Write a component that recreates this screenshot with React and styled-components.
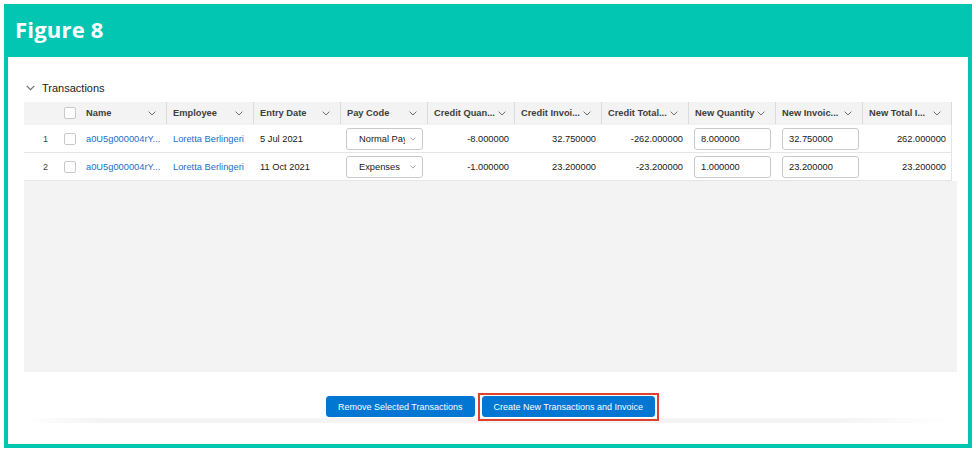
import React from "react";
import styled, { createGlobalStyle } from "styled-components";

const Global = createGlobalStyle`
  html, body { margin: 0; padding: 0; background: #ffffff; }
  body { font-family: "Liberation Sans", Arial, sans-serif; }
  * { box-sizing: border-box; }
`;

const TEAL = "#03c6b2";

const Frame = styled.div`
  margin: 4px;
  width: 968px;
  height: 444px;
  background: ${TEAL};
  padding: 0 4px 4px;
  display: flex;
  flex-direction: column;
`;

const FigureHeader = styled.div`
  height: 53px;
  flex: none;
  display: flex;
  align-items: center;
  padding: 0 0 4px 7px;
  color: #ffffff;
  font-family: "Open Sans", "Liberation Sans", sans-serif;
  font-weight: 700;
  font-size: 22px;
  letter-spacing: 0.2px;
`;

const Content = styled.div`
  flex: 1;
  background: #ffffff;
  display: flex;
  flex-direction: column;
  padding: 23px 11px 0 16px;
`;

const SectionTitle = styled.div`
  height: 16px;
  display: flex;
  align-items: center;
  gap: 7px;
  padding-left: 2px;
  margin-bottom: 6px;
  font-size: 11px;
  color: #181818;
`;

const Grid = styled.div`
  display: flex;
  flex-direction: column;
`;

const Table = styled.div`
  width: 928px;
  border-right: 1px solid #e5e5e5;
`;

const Row = styled.div`
  display: flex;
  height: ${(p) => (p.$header ? 23 : 28)}px;
  background: ${(p) => (p.$header ? "#f3f3f3" : "#ffffff")};
  border-bottom: 1px solid ${(p) => (p.$header ? "#f3f3f3" : "#e5e5e5")};
`;

const Cell = styled.div`
  width: ${(p) => p.$w}px;
  flex: none;
  display: flex;
  align-items: center;
  justify-content: ${(p) => (p.$right ? "flex-end" : "flex-start")};
  padding: 0 ${(p) => (p.$right ? 6 : 0)}px 0 ${(p) => (p.$pl ?? 6)}px;
  font-size: 9.3px;
  color: #181818;
  white-space: nowrap;
  overflow: hidden;
`;

const HeadCell = styled.div`
  width: ${(p) => p.$w}px;
  flex: none;
  display: flex;
  align-items: center;
  justify-content: space-between;
  gap: 3px;
  padding: 0 10px 0 6px;
  font-size: 9.3px;
  font-weight: 700;
  color: #3e3e3c;
  white-space: nowrap;
  border-right: 1px solid #dddbda;
  height: 100%;
`;

const NumCell = styled.div`
  width: 36px;
  flex: none;
  display: flex;
  align-items: center;
  justify-content: flex-end;
  padding-right: 12px;
  font-size: 9px;
  color: #444444;
`;

const CheckCell = styled.div`
  width: 20px;
  flex: none;
  display: flex;
  align-items: center;
  padding-left: 4px;
`;

const Box = styled.span`
  width: 12px;
  height: 12px;
  border: 1px solid #c9c9c9;
  border-radius: 2px;
  background: #ffffff;
`;

const Link = styled.span`
  color: #1a6ec8;
`;

const Select = styled.div`
  width: 77px;
  height: 22px;
  border: 1px solid #c9c9c9;
  border-radius: 3px;
  background: #fff;
  display: flex;
  align-items: center;
  gap: 5px;
  padding: 0 6px 0 12px;
  font-size: 9.3px;
  color: #181818;
`;

const SelectText = styled.span`
  flex: 1;
  overflow: hidden;
  white-space: nowrap;
  min-width: 0;
`;

const Input = styled.div`
  width: 77px;
  height: 22px;
  border: 1px solid #c9c9c9;
  border-radius: 3px;
  background: #fff;
  display: flex;
  align-items: center;
  padding-left: 6px;
  font-size: 9.3px;
  color: #181818;
`;

const Empty = styled.div`
  height: 191px;
  background: #f3f3f3;
`;

const Footer = styled.div`
  margin-top: 24px;
  display: flex;
  justify-content: center;
  gap: 7px;
`;

const Button = styled.button`
  position: relative;
  height: 21px;
  padding: 0 11px;
  background: #0176d3;
  border: 1px solid #0176d3;
  border-radius: 3px;
  color: #ffffff;
  font-family: "Liberation Sans", Arial, sans-serif;
  font-size: 9px;
  cursor: pointer;
`;

const Highlight = styled.span`
  position: absolute;
  left: -5px;
  right: -5px;
  top: -4px;
  bottom: -5px;
  border: 2px solid #e0402e;
  pointer-events: none;
`;

const FooterShade = styled.div`
  height: 5px;
  margin: 1px 6px 0 0;
  background: linear-gradient(
    to right,
    rgba(240, 240, 240, 0) 0%,
    #f4f4f4 8%,
    #f4f4f4 88%,
    rgba(240, 240, 240, 0) 100%
  );
`;

const Chevron = ({ w = 8, h = 5, color = "#706e6b" }) => (
  <svg width={w} height={h} viewBox="0 0 8 5" style={{ flex: "none" }}>
    <path d="M0.6 0.6 L4 4 L7.4 0.6" fill="none" stroke={color} strokeWidth="1" />
  </svg>
);

const columns = [
  "Name",
  "Employee",
  "Entry Date",
  "Pay Code",
  "Credit Quan...",
  "Credit Invoi...",
  "Credit Total...",
  "New Quantity",
  "New Invoic...",
  "New Total I...",
];

const rows = [
  {
    n: 1,
    id: "a0U5g000004rY...",
    emp: "Loretta Berlingeri",
    date: "5 Jul 2021",
    pay: "Normal Pay",
    cq: "-8.000000",
    ci: "32.750000",
    ct: "-262.000000",
    nq: "8.000000",
    ni: "32.750000",
    nt: "262.000000",
  },
  {
    n: 2,
    id: "a0U5g000004rY...",
    emp: "Loretta Berlingeri",
    date: "11 Oct 2021",
    pay: "Expenses",
    cq: "-1.000000",
    ci: "23.200000",
    ct: "-23.200000",
    nq: "1.000000",
    ni: "23.200000",
    nt: "23.200000",
  },
];

const W = 87;
const widthOf = (i) => (i === columns.length - 1 ? 89 : W);

export default function App() {
  return (
    <>
      <Global />
      <Frame>
        <FigureHeader>Figure 8</FigureHeader>
        <Content>
          <SectionTitle>
            <Chevron w={9} h={6} color="#706e6b" />
            <span>Transactions</span>
          </SectionTitle>
          <Grid>
            <Table>
              <Row $header>
                <NumCell />
                <CheckCell>
                  <Box />
                </CheckCell>
                {columns.map((c, i) => (
                  <HeadCell key={c} $w={widthOf(i)}>
                    <span>{c}</span>
                    <Chevron />
                  </HeadCell>
                ))}
              </Row>
              {rows.map((r) => (
                <Row key={r.n}>
                  <NumCell>{r.n}</NumCell>
                  <CheckCell>
                    <Box />
                  </CheckCell>
                  <Cell $w={W}>
                    <Link>{r.id}</Link>
                  </Cell>
                  <Cell $w={W}>
                    <Link>{r.emp}</Link>
                  </Cell>
                  <Cell $w={W}>{r.date}</Cell>
                  <Cell $w={W} $pl={5}>
                    <Select>
                      <SelectText>{r.pay}</SelectText>
                      <Chevron w={6} h={4} color="#8a8886" />
                    </Select>
                  </Cell>
                  <Cell $w={W} $right>{r.cq}</Cell>
                  <Cell $w={W} $right>{r.ci}</Cell>
                  <Cell $w={W} $right>{r.ct}</Cell>
                  <Cell $w={W} $pl={5}>
                    <Input>{r.nq}</Input>
                  </Cell>
                  <Cell $w={W} $pl={6}>
                    <Input>{r.ni}</Input>
                  </Cell>
                  <Cell $w={89} $right>{r.nt}</Cell>
                </Row>
              ))}
            </Table>
            <Empty />
          </Grid>
          <Footer>
            <Button>Remove Selected Transactions</Button>
            <Button>
              Create New Transactions and Invoice
              <Highlight />
            </Button>
          </Footer>
          <FooterShade />
        </Content>
      </Frame>
    </>
  );
}
